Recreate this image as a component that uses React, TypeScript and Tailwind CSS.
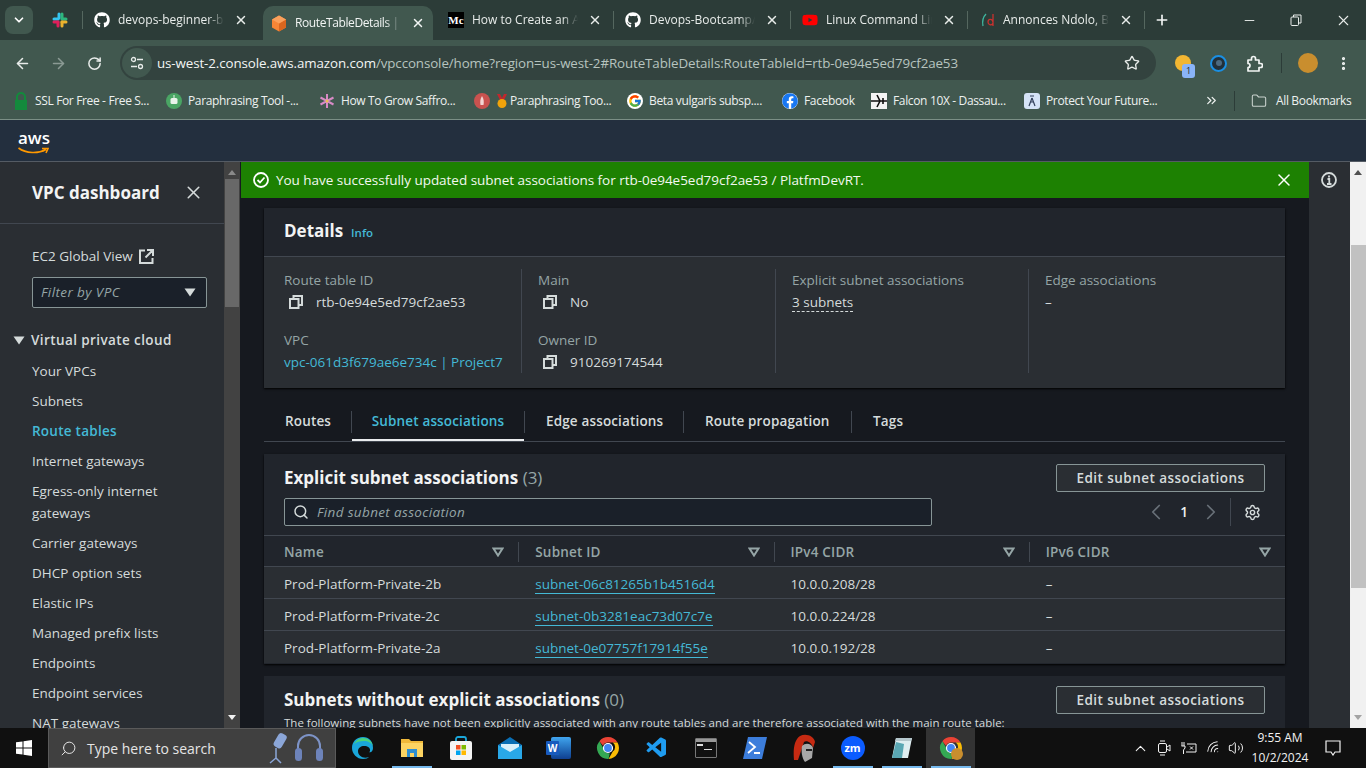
import React from "react";
import { FaGithub, FaYoutube, FaFacebook } from "react-icons/fa";
import { FcGoogle } from "react-icons/fc";
import { VscVscode } from "react-icons/vsc";
import { ArrowLeft, ArrowRight, RotateCw, Star, EllipsisVertical, Minus, Plus, X, Folder, ChevronsRight, ChevronDown, ChevronUp, ChevronLeft, ChevronRight, Search, Settings, Wifi, Volume2 } from "lucide-react";

const ember = "font-['Open_Sans','Noto_Sans',sans-serif]";

function Slack() {
  return (
    <svg width="16" height="16" viewBox="0 0 16 16">
      <rect x="5.5" y="0.5" width="3" height="7" rx="1.5" fill="#36c5f0" />
      <rect x="0.5" y="5.5" width="7" height="3" rx="1.5" fill="#36c5f0" />
      <rect x="8.5" y="0.5" width="3" height="7" rx="1.5" fill="#2eb67d" />
      <rect x="8.5" y="5.5" width="7" height="3" rx="1.5" fill="#2eb67d" />
      <rect x="8.5" y="8.5" width="3" height="7" rx="1.5" fill="#ecb22e" />
      <rect x="8.5" y="8.5" width="7" height="3" rx="1.5" fill="#ecb22e" />
      <rect x="4.5" y="8.5" width="3" height="7" rx="1.5" fill="#e01e5a" />
      <rect x="0.5" y="8.5" width="7" height="3" rx="1.5" fill="#e01e5a" />
    </svg>
  );
}

function Cube() {
  return (
    <svg width="16" height="17" viewBox="0 0 16 17">
      <path d="M8 0.5 15 4.5V12.5L8 16.5 1 12.5V4.5Z" fill="#f58536" />
      <path d="M8 8.5 15 4.5V12.5L8 16.5Z" fill="#d9661f" />
      <path d="M8 0.5 15 4.5 8 8.5 1 4.5Z" fill="#f9a05c" />
    </svg>
  );
}

function Chrome({ size = 24 }: { size?: number }) {
  return (
    <svg width={size} height={size} viewBox="0 0 24 24">
      <path d="M12 1a11 11 0 0 1 9.5 5.5H12a5.5 5.5 0 0 0-5 3.2L3.4 5.2A11 11 0 0 1 12 1Z" fill="#ea4335" />
      <path d="M21.5 6.500A11 11 0 0 1 12.500 23l4.300-7.500a5.500 5.500 0 0 0 0-9Z" fill="#fbbc04" />
      <path d="M12.500 23A11 11 0 0 1 3.400 5.200L7.800 13a5.500 5.500 0 0 0 6 4.300Z" fill="#34a853" />
      <circle cx="12" cy="12" r="4.500" fill="#4285f4" stroke="#fff" strokeWidth="1.200" />
    </svg>
  );
}

function CopyIcon() {
  return (
    <svg width="14" height="14" viewBox="0 0 14 14" fill="none" stroke="#d5dbdb" strokeWidth="2">
      <rect x="1" y="4" width="8.500" height="9" />
      <path d="M4.500 4V1H13V10H9.500" />
    </svg>
  );
}

function Tri({ className = "" }: { className?: string }) {
  return (
    <svg width="12" height="9" viewBox="0 0 12 9" className={className}>
      <path d="M0.500 0.500H11.500L6 8.500Z" fill="currentColor" />
    </svg>
  );
}

function FilterArrow() {
  return (
    <svg width="12" height="10" viewBox="0 0 12 10" fill="none" stroke="#95a5a6" strokeWidth="2">
      <path d="M1.500 1.500H10.500L6 8.500Z" />
    </svg>
  );
}

type TabProps = { icon: React.ReactNode; title: string; sep?: boolean };

function Tab({ icon, title, sep = true }: TabProps) {
  return (
    <div className="relative flex h-[40px] w-[177px] shrink-0 items-center pl-[11px] text-[12px] text-[#e8ecea]">
      {sep && <div className="absolute right-0 top-[11px] h-[18px] w-px bg-[#55675f]" />}
      <div className="flex w-[16px] justify-center">{icon}</div>
      <div className="ml-[8px] w-[106px] overflow-hidden whitespace-nowrap [mask-image:linear-gradient(to_right,black_85%,transparent)]">{title}</div>
      <X size={14} strokeWidth={2.5} className="ml-[10px] shrink-0 text-[#e8ecea]" />
    </div>
  );
}

function TabStrip() {
  return (
    <div className="flex h-[40px] items-center bg-[#2c3c38]">
      <div className="ml-[5px] mr-[9px] flex h-[28px] w-[28px] items-center justify-center rounded-lg bg-[#41584f]">
        <ChevronDown size={14} strokeWidth={3} className="text-white" />
      </div>
      <div className="relative flex h-[40px] w-[41px] items-center pl-[10px]">
        <Slack />
        <div className="absolute right-0 top-[11px] h-[18px] w-px bg-[#55675f]" />
      </div>
      <Tab icon={<FaGithub size={16} color="#fff" />} title="devops-beginner-bootcamp" sep={false} />
      <div className="ml-[3px] mr-[4px] flex h-[34px] w-[170px] shrink-0 items-center self-end rounded-t-[10px] bg-[#41584f] pl-[8px] text-[12px] text-[#f2f5f4]">
        <div className="flex w-[16px] justify-center"><Cube /></div>
        <div className="ml-[8px] w-[106px] overflow-hidden whitespace-nowrap tracking-[-0.4px] [mask-image:linear-gradient(to_right,black_85%,transparent)]">RouteTableDetails | VPC Console</div>
        <X size={14} strokeWidth={2.5} className="ml-[10px] shrink-0" />
      </div>
      <Tab
        icon={<div className="flex h-[16px] w-[16px] items-center justify-center bg-black font-['Liberation_Serif',serif] text-[11px] font-bold text-white">Mc</div>}
        title="How to Create an AWS VPC"
      />
      <Tab icon={<FaGithub size={16} color="#fff" />} title="Devops-Bootcamp/linux" />
      <Tab icon={<FaYoutube size={16} color="#ff0000" />} title="Linux Command Line Tutorial" />
      <Tab
        icon={
          <svg width="14" height="14" viewBox="0 0 14 14" fill="none" strokeWidth="1.300">
            <path d="M3 13C2 8 3 4 6 1" stroke="#3fb8a0" />
            <path d="M13 1V13M13 9C12 5 8 6 8 9S12 13 13 10" stroke="#c8322f" />
          </svg>
        }
        title="Annonces Ndolo, Biens"
      />
      <Plus size={16} strokeWidth={2.5} className="ml-[9px] text-[#f2f5f4]" />
      <div className="ml-auto flex items-center text-[#e8ecea]">
        <Minus size={15} strokeWidth={1.500} className="mr-[33px]" />
        <svg width="12" height="12" viewBox="0 0 12 12" fill="none" stroke="currentColor" className="mr-[33px]">
          <rect x="1" y="3" width="7.500" height="8.500" rx="1" />
          <path d="M3.500 3V1H11V9H8.500" />
        </svg>
        <X size={17} strokeWidth={1.500} className="mr-[14px]" />
      </div>
    </div>
  );
}

function Toolbar() {
  return (
    <div className="flex h-[42px] items-center bg-[#41584f] pt-[4px]">
      <ArrowLeft size={17} strokeWidth={2.200} className="ml-[14px] text-[#e8ecea]" />
      <ArrowRight size={17} strokeWidth={2.200} className="ml-[19px] text-[#8b9a94]" />
      <RotateCw size={15} strokeWidth={2.400} className="ml-[20px] text-[#e8ecea]" />
      <div className="ml-[18px] flex h-[34px] w-[1036px] items-center rounded-full bg-[#33433f]">
        <div className="ml-[2px] flex h-[30px] w-[30px] items-center justify-center rounded-full bg-[#41584f]">
          <svg width="14" height="14" viewBox="0 0 14 14" fill="none" stroke="#e8ecea" strokeWidth="1.300">
            <circle cx="3.500" cy="3.500" r="2" />
            <path d="M7 3.500H13M1 10.500H7" />
            <circle cx="10.500" cy="10.500" r="2" />
          </svg>
        </div>
        <div className="ml-[5px] whitespace-nowrap text-[13.350px] tracking-[-0.1px] text-[#b7c4bf]">
          <span className="text-[#f2f5f4]">us-west-2.console.aws.amazon.com</span>/vpcconsole/home?region=us-west-2#RouteTableDetails:RouteTableId=rtb-0e94e5ed79cf2ae53
        </div>
        <Star size={16} className="ml-auto mr-[16px] text-[#e8ecea]" />
      </div>
      <div className="relative ml-[19px] h-[16px] w-[16px] rounded-full bg-[#f2b632]">
        <div className="absolute left-[7px] top-[9px] flex h-[14px] w-[13px] items-center justify-center rounded-[3px] bg-[#8ab4f8] text-[9px] text-[#1f2d28]">1</div>
      </div>
      <div className="ml-[19px] flex h-[17px] w-[17px] items-center justify-center rounded-full border-2 border-[#1a8fe3] bg-[#22303a]">
        <div className="h-[6px] w-[6px] rounded-full bg-[#4d6a80]" />
      </div>
      <svg width="17" height="17" viewBox="0 0 17 17" fill="none" stroke="#f2f5f4" strokeWidth="1.700" strokeLinejoin="round" className="ml-[19px]">
        <path d="M2 5H5.500V3.500a2 2 0 0 1 4 0V5H13V8.500H14.500a2 2 0 0 1 0 4H13V16H2V12.500a2 2 0 0 0 0-4Z" />
      </svg>
      <div className="ml-[18px] h-[20px] w-px bg-[#2c3c38]" />
      <div className="ml-[16px] h-[20px] w-[20px] rounded-full bg-[#c98e2e]" />
      <EllipsisVertical size={17} strokeWidth={2.500} className="ml-[17px] text-[#f2f5f4]" />
    </div>
  );
}

function Bookmark({ width, icon, title }: { width: string; icon: React.ReactNode; title: string }) {
  return (
    <div className={`flex items-center gap-[6px] whitespace-nowrap ${width}`}>
      {icon}
      <span>{title}</span>
    </div>
  );
}

function Bookmarks() {
  return (
    <div className="flex h-[38px] items-center border-b border-[#7b8f86] bg-[#41584f] pl-[13px] text-[12px] tracking-[-0.35px] text-[#edf1ef]">
      <Bookmark
        width="w-[153px]"
        title="SSL For Free - Free S..."
        icon={
          <svg width="16" height="18" viewBox="0 0 16 18">
            <path d="M4 8V5a4 4 0 0 1 8 0v3" fill="none" stroke="#138a3c" strokeWidth="2" />
            <rect x="2" y="8" width="12" height="10" fill="#138a3c" />
          </svg>
        }
      />
      <Bookmark
        width="w-[153px]"
        title="Paraphrasing Tool -..."
        icon={
          <svg width="16" height="16" viewBox="0 0 16 16">
            <circle cx="8" cy="8" r="8" fill="#4aa564" />
            <rect x="4.500" y="5" width="7" height="6" rx="1.500" fill="#e8f3ea" />
            <rect x="7.500" y="2" width="1" height="3" fill="#e8f3ea" />
          </svg>
        }
      />
      <Bookmark
        width="w-[155px]"
        title="How To Grow Saffro..."
        icon={
          <svg width="16" height="16" viewBox="0 0 16 16" stroke="#d88ac6" strokeWidth="2">
            <path d="M8 1V15M1.500 4.500 14.500 11.500M14.500 4.500 1.500 11.500" />
            <circle cx="8" cy="8" r="1.500" fill="#e8c050" stroke="none" />
          </svg>
        }
      />
      <div className="flex w-[153px] items-center whitespace-nowrap">
        <svg width="16" height="16" viewBox="0 0 16 16">
          <circle cx="8" cy="8" r="8" fill="#c9524f" />
          <path d="M8 3C10 6 10 9 9.500 12H6.500C6 9 6 6 8 3Z" fill="#f3d5d3" />
        </svg>
        <svg width="12" height="16" viewBox="0 0 12 16" className="ml-[6px]">
          <path d="M1 1H4L6 5 8 1H11L8 7H4Z" fill="#c1272d" />
          <circle cx="6" cy="10.500" r="4.500" fill="#f0a30a" />
        </svg>
        <span className="ml-[2px]">Paraphrasing Too...</span>
      </div>
      <Bookmark width="w-[155px]" title="Beta vulgaris subsp...." icon={<div className="flex h-[16px] w-[16px] items-center justify-center rounded-full bg-white"><FcGoogle size={14} /></div>} />
      <Bookmark width="w-[89px]" title="Facebook" icon={<div className="rounded-full bg-white"><FaFacebook size={16} color="#1877f2" /></div>} />
      <Bookmark
        width="w-[153px]"
        title="Falcon 10X - Dassau..."
        icon={
          <svg width="16" height="16" viewBox="0 0 16 16">
            <rect width="16" height="16" fill="#f4f4f4" />
            <path d="M0 8H16M6 2 9 8 6 14M12 5V11" stroke="#111" strokeWidth="1.600" fill="none" />
          </svg>
        }
      />
      <Bookmark
        width="w-[180px]"
        title="Protect Your Future..."
        icon={
          <div className="flex h-[16px] w-[16px] items-center justify-center rounded-[3px] bg-[#d5e3f7]">
            <svg width="8" height="12" viewBox="0 0 8 12" stroke="#33415c" strokeWidth="1.200" fill="none">
              <path d="M2 1H6M4 3 1 11M4 3 7 11M2.500 7H5.500" />
            </svg>
          </div>
        }
      />
      <ChevronsRight size={15} strokeWidth={2} className="text-[#edf1ef]" />
      <div className="ml-[15px] h-[20px] w-px bg-[#2c3c38]" />
      <Folder size={16} strokeWidth={1.600} className="ml-[16px] text-[#c9d2ce]" />
      <span className="ml-[9px] whitespace-nowrap">All Bookmarks</span>
    </div>
  );
}

function Sidebar() {
  const items: { t: string; cls?: string }[] = [
    { t: "Your VPCs" },
    { t: "Subnets" },
    { t: "Route tables", cls: "text-[#44b9d6] font-semibold tracking-[0.25px]" },
    { t: "Internet gateways" },
  ];
  const rest = ["Carrier gateways", "DHCP option sets", "Elastic IPs", "Managed prefix lists", "Endpoints", "Endpoint services", "NAT gateways"];
  return (
    <aside className="flex h-[566px] w-[224px] shrink-0 flex-col overflow-hidden bg-[#2a2e33] text-[13.500px] text-[#d5dbdb]">
      <div className="flex h-[62px] shrink-0 items-center justify-between border-b border-[#414750] pl-[32px] pr-[20px]">
        <span className="text-[17px] font-bold text-[#f2f3f3]">VPC dashboard</span>
        <X size={21} strokeWidth={1.800} className="text-[#d5dbdb]" />
      </div>
      <div className="mt-[21px] flex h-[22px] shrink-0 items-center pl-[32px]">
        EC2 Global View
        <svg width="15" height="15" viewBox="0 0 15 15" fill="none" stroke="#d5dbdb" strokeWidth="2" className="ml-[6px]">
          <path d="M6 1.500H1V14H13.500V9M8 1H14V7M14 1 6.500 8.500" />
        </svg>
      </div>
      <div className="ml-[32px] mt-[10px] flex h-[31px] w-[175px] shrink-0 items-center justify-between rounded-[2px] border border-[#879596] bg-[#1a2029] pl-[8px] pr-[10px] italic tracking-[0.4px] text-[#95a5a6]">
        Filter by VPC
        <Tri className="text-[#d5dbdb]" />
      </div>
      <div className="mt-[21px] flex h-[22px] shrink-0 items-center pl-[13px] font-semibold tracking-[0.4px] text-[#d5dbdb]">
        <Tri className="mr-[6px] text-[#d5dbdb]" />
        Virtual private cloud
      </div>
      <div className="mt-[9px] flex flex-col gap-[8px] pl-[32px]">
        {items.map((i) => (
          <div key={i.t} className={`h-[22px] leading-[22px] whitespace-nowrap ${i.cls ?? ""}`}>{i.t}</div>
        ))}
        <div className="w-[170px] leading-[22px]">Egress-only internet gateways</div>
        {rest.map((t) => (
          <div key={t} className="h-[22px] leading-[22px] whitespace-nowrap">{t}</div>
        ))}
      </div>
    </aside>
  );
}

function SideScroll() {
  return (
    <div className="flex h-[566px] w-[16px] shrink-0 flex-col items-center bg-[#424242]">
      <svg width="8" height="5" viewBox="0 0 8 5" className="mt-[8px]"><path d="M4 0 8 5H0Z" fill="#8a8a8a" /></svg>
      <div className="mt-[4px] h-[128px] w-[14px] bg-[#686868]" />
      <svg width="8" height="5" viewBox="0 0 8 5" className="mt-auto mb-[8px]"><path d="M4 5 0 0H8Z" fill="#f1f1f1" /></svg>
    </div>
  );
}

function Field({ label, children }: { label: string; children: React.ReactNode }) {
  return (
    <div>
      <div className="h-[22px] leading-[22px] text-[#95a5a6]">{label}</div>
      <div className="h-[22px] leading-[22px]">{children}</div>
    </div>
  );
}

function Copyable({ text }: { text: string }) {
  return (
    <div className="flex items-center text-[#d5dbdb]">
      <span className="ml-[5px] mr-[13px] flex"><CopyIcon /></span>
      {text}
    </div>
  );
}

function DetailsCard() {
  return (
    <section className="h-[180px] bg-[#2a2e33] shadow-[0_1px_2px_#000]">
      <div className="flex h-[49px] items-center gap-[8px] border-b border-[#414750] bg-[#21252c] pb-[2px] pl-[20px]">
        <span className="text-[17px] font-bold text-[#f2f3f3]">Details</span>
        <span className="mt-[3px] text-[11.500px] font-semibold text-[#44b9d6]">Info</span>
      </div>
      <div className="grid grid-cols-[238px_238px_237px_1fr] gap-x-[16px] pl-[20px] pt-[12px]">
        <div className="flex h-[104px] flex-col gap-[16px] border-r border-[#414750]">
          <Field label="Route table ID"><Copyable text="rtb-0e94e5ed79cf2ae53" /></Field>
          <Field label="VPC"><span className="whitespace-nowrap text-[#44b9d6]">vpc-061d3f679ae6e734c | Project7</span></Field>
        </div>
        <div className="flex h-[104px] flex-col gap-[16px] border-r border-[#414750]">
          <Field label="Main"><Copyable text="No" /></Field>
          <Field label="Owner ID"><Copyable text="910269174544" /></Field>
        </div>
        <div className="h-[104px] border-r border-[#414750]">
          <Field label="Explicit subnet associations">
            <span className="border-b border-dashed border-[#d5dbdb] text-[#d5dbdb]">3 subnets</span>
          </Field>
        </div>
        <div>
          <Field label="Edge associations"><span>–</span></Field>
        </div>
      </div>
    </section>
  );
}

function TabsRow() {
  const sep = "h-[22px] w-px bg-[#414750]";
  return (
    <div className="mt-[20px] flex h-[34px] items-center border-b border-[#414750] pb-[6px] font-semibold tracking-[0.15px] text-[#d5dbdb]">
      <div className="w-[87px] pl-[21px]">Routes</div>
      <div className={sep} />
      <div className="relative flex h-[22px] w-[172px] items-center justify-center text-[#44b9d6]">
        Subnet associations
        <div className="absolute bottom-[-8px] left-0 h-[2px] w-full bg-[#e9ebed]" />
      </div>
      <div className={sep} />
      <div className="w-[158px] pl-[21px] whitespace-nowrap">Edge associations</div>
      <div className={sep} />
      <div className="w-[167px] pl-[21px] whitespace-nowrap">Route propagation</div>
      <div className={sep} />
      <div className="pl-[21px]">Tags</div>
    </div>
  );
}

function EditButton() {
  return (
    <button className="flex h-[28px] w-[209px] items-center justify-center rounded-[2px] border border-[#879596] bg-[#2a2e33] font-semibold tracking-[0.45px] text-[#d5dbdb]">
      Edit subnet associations
    </button>
  );
}

const rows = [
  ["Prod-Platform-Private-2b", "subnet-06c81265b1b4516d4", "10.0.0.208/28"],
  ["Prod-Platform-Private-2c", "subnet-0b3281eac73d07c7e", "10.0.0.224/28"],
  ["Prod-Platform-Private-2a", "subnet-0e07757f17914f55e", "10.0.0.192/28"],
];

function AssociationsCard() {
  const heads = ["Name", "Subnet ID", "IPv4 CIDR", "IPv6 CIDR"];
  return (
    <section className="mt-[12px] h-[210px] bg-[#21252c] shadow-[0_1px_2px_#000]">
      <div className="flex h-[82px] border-b border-[#414750] px-[20px]">
        <div className="w-[648px]">
          <div className="mt-[12px] h-[24px] whitespace-nowrap text-[17px] leading-[24px] font-bold text-[#f2f3f3]">
            Explicit subnet associations <span className="font-normal text-[#95a5a6]">(3)</span>
          </div>
          <div className="mt-[8px] flex h-[28px] items-center rounded-[2px] border border-[#879596] bg-[#1a2029] pl-[8px] italic tracking-[0.35px] text-[#95a5a6]">
            <Search size={16} strokeWidth={2.200} className="mr-[8px] text-[#d5dbdb]" />
            Find subnet association
          </div>
        </div>
        <div className="ml-auto flex flex-col items-end">
          <div className="mt-[10px]"><EditButton /></div>
          <div className="mt-[6px] flex h-[28px] items-center text-[#687078]">
            <ChevronLeft size={26} strokeWidth={1.600} />
            <span className="ml-[11px] w-[8px] text-center font-semibold text-[#f2f3f3]">1</span>
            <ChevronRight size={26} strokeWidth={1.600} className="ml-[10px]" />
            <div className="ml-[6px] h-[28px] w-px bg-[#414750]" />
            <Settings size={17} strokeWidth={2} className="ml-[13px] mr-[4px] text-[#d5dbdb]" />
          </div>
        </div>
      </div>
      <div className="grid h-[31px] grid-cols-4 items-center border-b border-[#414750] pt-[2px] font-semibold tracking-[0.2px] text-[#95a5a6]">
        {heads.map((h, i) => (
          <div key={h} className={`flex h-[20px] items-center justify-between ${i === 0 ? "pl-[20px] border-r border-[#414750]" : i === 3 ? "pl-[16px]" : "pl-[16px] border-r border-[#414750]"} pr-[14px]`}>
            {h}
            <FilterArrow />
          </div>
        ))}
      </div>
      {rows.map((r, idx) => (
        <div key={r[0]} className={`grid h-[32px] grid-cols-4 items-center bg-[#2a2e33] pt-[3px] text-[#d5dbdb] ${idx < 2 ? "border-b border-[#414750]" : ""}`}>
          <div className="pl-[20px] whitespace-nowrap">{r[0]}</div>
          <div className="pl-[16px]"><span className="border-b border-[#44b9d6] text-[#44b9d6]">{r[1]}</span></div>
          <div className="pl-[16px]">{r[2]}</div>
          <div className="pl-[16px]">–</div>
        </div>
      ))}
    </section>
  );
}

function WithoutCard() {
  return (
    <section className="mt-[12px] h-[60px] overflow-hidden bg-[#21252c] px-[20px]">
      <div className="flex items-start justify-between">
        <div className="mt-[12px] h-[24px] whitespace-nowrap text-[17px] leading-[24px] font-bold text-[#f2f3f3]">
          Subnets without explicit associations <span className="font-normal text-[#95a5a6]">(0)</span>
        </div>
        <div className="mt-[10px]"><EditButton /></div>
      </div>
      <div className="-mt-[1px] whitespace-nowrap text-[11.500px] leading-[20px] text-[#d5dbdb]">
        The following subnets have not been explicitly associated with any route tables and are therefore associated with the main route table:
      </div>
    </section>
  );
}

function Main() {
  return (
    <main className="h-[566px] w-[1069px] shrink-0 overflow-hidden bg-[#16191f] pl-px text-[13.500px] text-[#d5dbdb]">
      <div className="flex h-[36px] items-center bg-[#1d8102] pl-[12px] pr-[15px] text-[#f2f8f0]">
        <svg width="16" height="16" viewBox="0 0 16 16" fill="none" stroke="#fff" strokeWidth="1.800">
          <circle cx="8" cy="8" r="7" />
          <path d="M4.500 8 7 10.500 11.500 5.500" />
        </svg>
        <span className="ml-[7px] whitespace-nowrap tracking-[-0.03px]">You have successfully updated subnet associations for rtb-0e94e5ed79cf2ae53 / PlatfmDevRT.</span>
        <X size={20} strokeWidth={1.800} className="ml-auto text-white" />
      </div>
      <div className="ml-[23px] w-[1021px] pt-[10px]">
        <DetailsCard />
        <TabsRow />
        <AssociationsCard />
        <WithoutCard />
      </div>
    </main>
  );
}

function Console() {
  return (
    <div className={`flex h-[566px] ${ember}`}>
      <Sidebar />
      <SideScroll />
      <Main />
      <div className="flex h-[566px] w-[41px] shrink-0 justify-center bg-[#2a2e33] pr-px pt-[10px]">
        <svg width="16" height="16" viewBox="0 0 16 16" fill="none" stroke="#d5dbdb" strokeWidth="1.800">
          <circle cx="8" cy="8" r="7" />
          <path d="M6.500 7H8.300V12M6 12H10.500M8 3.500V5.500" />
        </svg>
      </div>
      <div className="flex h-[566px] w-[16px] shrink-0 flex-col items-center bg-[#f1f1f1]">
        <svg width="8" height="5" viewBox="0 0 8 5" className="mt-[8px]"><path d="M4 0 8 5H0Z" fill="#505050" /></svg>
        <div className="mt-[70px] h-[343px] w-[15px] bg-[#c1c1c1]" />
        <svg width="8" height="5" viewBox="0 0 8 5" className="mt-auto mb-[8px]"><path d="M4 5 0 0H8Z" fill="#a3a3a3" /></svg>
      </div>
    </div>
  );
}

function Slot({ children, on, active }: { children: React.ReactNode; on?: boolean; active?: boolean }) {
  return (
    <div className={`relative flex h-[40px] w-[49px] shrink-0 items-center justify-center ${active ? "bg-[#333333]" : ""}`}>
      {children}
      {on && <div className="absolute bottom-0 left-[5px] right-[4px] h-[2px] bg-[#76b9ed]" />}
    </div>
  );
}

function Taskbar() {
  return (
    <div className="flex h-[40px] items-center bg-[#101010] font-['Open_Sans',sans-serif] text-white">
      <div className="flex h-[40px] w-[48px] shrink-0 items-center justify-center">
        <svg width="16" height="16" viewBox="0 0 16 16" fill="#fff">
          <path d="M0 2.300 6.500 1.400V7.500H0ZM7.500 1.300 16 0V7.500H7.500ZM0 8.500H6.500V14.600L0 13.700ZM7.500 8.500H16V16L7.500 14.700Z" />
        </svg>
      </div>
      <div className="flex h-[40px] w-[288px] shrink-0 items-center border border-[#5a5a5a] bg-[#404040] pl-[11px] pr-[10px] text-[14px] text-[#e5e5e5]">
        <Search size={17} strokeWidth={1.400} className="mr-[10px] -scale-x-100" />
        Type here to search
        <svg width="60" height="36" viewBox="0 0 60 36" fill="none" className="ml-auto">
          <rect x="11" y="3" width="9" height="15" rx="3" fill="#8ba6d8" transform="rotate(30 15 10)" />
          <path d="M11 18V28M11 28 5 33M11 28 16 33" stroke="#8ba6d8" strokeWidth="1.500" />
          <path d="M33 25V16a11 11 0 0 1 22 0V25" stroke="#7d93c7" strokeWidth="2" />
          <rect x="30" y="18" width="7" height="13" rx="3.500" fill="#6d83ba" />
          <rect x="51" y="18" width="7" height="13" rx="3.500" fill="#6d83ba" />
        </svg>
      </div>
      <div className="ml-[2px] flex">
        <Slot>
          <svg width="24" height="24" viewBox="0 0 24 24">
            <path d="M12 1C5 1 1 6 1 12c0 6 5 11 11 11 3 0 5-1 6-2-6 2-11-1-11-6 0-3 3-5 6-5 4 0 6 2 6 4 0 1 0 2-1 2 2 1 4-1 4-4C22 5 18 1 12 1Z" fill="#1aa6d9" />
            <path d="M3 8C5 4 9 2 12 2c5 0 9 3 10 8-1-3-5-5-9-5-4 0-8 1-10 3Z" fill="#49d17c" />
          </svg>
        </Slot>
        <Slot on>
          <svg width="22" height="20" viewBox="0 0 22 20">
            <path d="M0 1H8L10 3H22V19H0Z" fill="#f0b93a" />
            <rect x="0" y="5" width="22" height="14" fill="#fcd462" />
            <rect x="6" y="11" width="10" height="8" fill="#2f8fd0" />
            <rect x="9" y="15" width="4" height="4" fill="#fcd462" />
          </svg>
        </Slot>
        <Slot>
          <svg width="22" height="24" viewBox="0 0 22 24">
            <path d="M6 5V3a2 2 0 0 1 2-2h6a2 2 0 0 1 2 2v2" fill="none" stroke="#1aa6d9" strokeWidth="1.800" />
            <rect x="0" y="5" width="22" height="19" rx="2" fill="#f4f4f4" />
            <rect x="6" y="9" width="4.500" height="4.500" fill="#f25022" />
            <rect x="11.500" y="9" width="4.500" height="4.500" fill="#7fba00" />
            <rect x="6" y="14.500" width="4.500" height="4.500" fill="#00a4ef" />
            <rect x="11.500" y="14.500" width="4.500" height="4.500" fill="#ffb900" />
          </svg>
        </Slot>
        <Slot>
          <svg width="24" height="22" viewBox="0 0 24 22">
            <path d="M12 0 24 8V22H0V8Z" fill="#0a6fb5" />
            <path d="M3 7H21V14L12 19 3 14Z" fill="#d8f0fb" />
            <path d="M0 8 12 15 24 8V22H0Z" fill="#29a8e8" />
          </svg>
        </Slot>
        <Slot>
          <div className="relative h-[22px] w-[25px]">
            <div className="absolute right-0 top-0 h-[22px] w-[20px] rounded-[2px] bg-gradient-to-b from-[#41a5ee] to-[#103f91]" />
            <div className="absolute left-0 top-[4px] flex h-[14px] w-[13px] items-center justify-center rounded-[1px] bg-[#185abd] text-[10px] font-bold text-white">W</div>
          </div>
        </Slot>
        <Slot><Chrome size={24} /></Slot>
        <Slot><VscVscode size={24} color="#1f9cf0" /></Slot>
        <Slot>
          <div className="h-[20px] w-[22px] rounded-[1px] border border-[#777] bg-[#111]">
            <div className="h-[3px] bg-[#999]" />
            <div className="mt-[2px] ml-[1px] flex gap-[2px]">
              <div className="h-[2px] w-[6px] bg-[#ddd]" />
            </div>
            <div className="ml-[8px] mt-[3px] h-px w-[8px] bg-[#ddd]" />
          </div>
        </Slot>
        <Slot>
          <svg width="24" height="22" viewBox="0 0 24 22">
            <path d="M5 0H24L19 22H0Z" fill="#3c7ddb" />
            <path d="M6 5 12 10 5 16M11 16H17" stroke="#fff" strokeWidth="1.800" fill="none" />
          </svg>
        </Slot>
        <Slot>
          <svg width="24" height="28" viewBox="0 0 24 28">
            <path d="M8 2C14-1 22 2 23 8L21 14C20 8 14 6 12 8L6 26H2C1 16 2 6 8 2Z" fill="#c62a12" />
            <path d="M10 12C14 8 20 10 21 14L20 24 13 28C10 24 9 18 10 12Z" fill="#a8a8a8" />
            <path d="M14 15H20V17H14Z" fill="#222" />
          </svg>
        </Slot>
        <Slot on>
          <div className="flex h-[24px] w-[24px] items-center justify-center rounded-full bg-[#0b5cff] text-[11px] font-bold text-white">zm</div>
        </Slot>
        <Slot on>
          <svg width="24" height="24" viewBox="0 0 24 24">
            <path d="M6 2H22L18 22H2Z" fill="#dfeef1" />
            <path d="M6 6 2 22H12L14 8Z" fill="#5aa7b3" />
            <path d="M6 2H22L21 5H5Z" fill="#b5c7cc" />
          </svg>
        </Slot>
        <Slot on active>
          <div className="relative">
            <Chrome size={24} />
            <div className="absolute bottom-0 right-0 h-[12px] w-[12px] rounded-full bg-[#c98e2e]" />
          </div>
        </Slot>
      </div>
      <div className="ml-auto flex items-center text-[#f2f2f2]">
        <ChevronUp size={17} strokeWidth={1.500} className="mr-[8px]" />
        <svg width="14" height="16" viewBox="0 0 14 16" fill="none" stroke="currentColor" className="mr-[10px]">
          <rect x="1.500" y="3.500" width="8" height="9" rx="1.500" />
          <path d="M10 7 13 5V11L10 9M3 1H8M3 15H8" />
        </svg>
        <svg width="16" height="14" viewBox="0 0 16 14" fill="none" stroke="currentColor" className="mr-[9px]">
          <path d="M1 1V5M3 1V5M0.500 5H4V7L2.500 9V13M6 3H15V11H5M9 5.500 12 8.500M12 5.500 9 8.500" />
        </svg>
        <Wifi size={16} strokeWidth={1.500} className="mr-[6px] -rotate-45" />
        <Volume2 size={16} strokeWidth={1.500} className="mr-[5px]" />
        <div className="w-[62px] text-center text-[12px] leading-[20px]">
          <div>9:55 AM</div>
          <div>10/2/2024</div>
        </div>
        <svg width="16" height="16" viewBox="0 0 16 16" fill="none" stroke="currentColor" strokeWidth="1.200" className="ml-[14px] mr-[25px]">
          <path d="M1 1H15V12H10L8 15 6 12H1Z" />
        </svg>
      </div>
    </div>
  );
}

export default function App() {
  return (
    <div className="flex h-[768px] w-[1366px] flex-col overflow-hidden bg-[#16191f] font-['Open_Sans',sans-serif]">
      <TabStrip />
      <Toolbar />
      <Bookmarks />
      <header className={`flex h-[42px] items-center border-b border-[#545b64] bg-[#232f3e] pl-[18px] ${ember}`}>
        <div className="relative h-[26px] w-[32px]">
          <span className="absolute left-0 top-[-3px] text-[17px] font-semibold text-white">aws</span>
          <svg width="31" height="8" viewBox="0 0 31 8" fill="none" className="absolute left-0 top-[19px]">
            <path d="M0.500 1C8 6.500 20 7 28 2.500M24 1.500H30L28 6" stroke="#f90" strokeWidth="1.600" />
          </svg>
        </div>
      </header>
      <Console />
      <Taskbar />
    </div>
  );
}
